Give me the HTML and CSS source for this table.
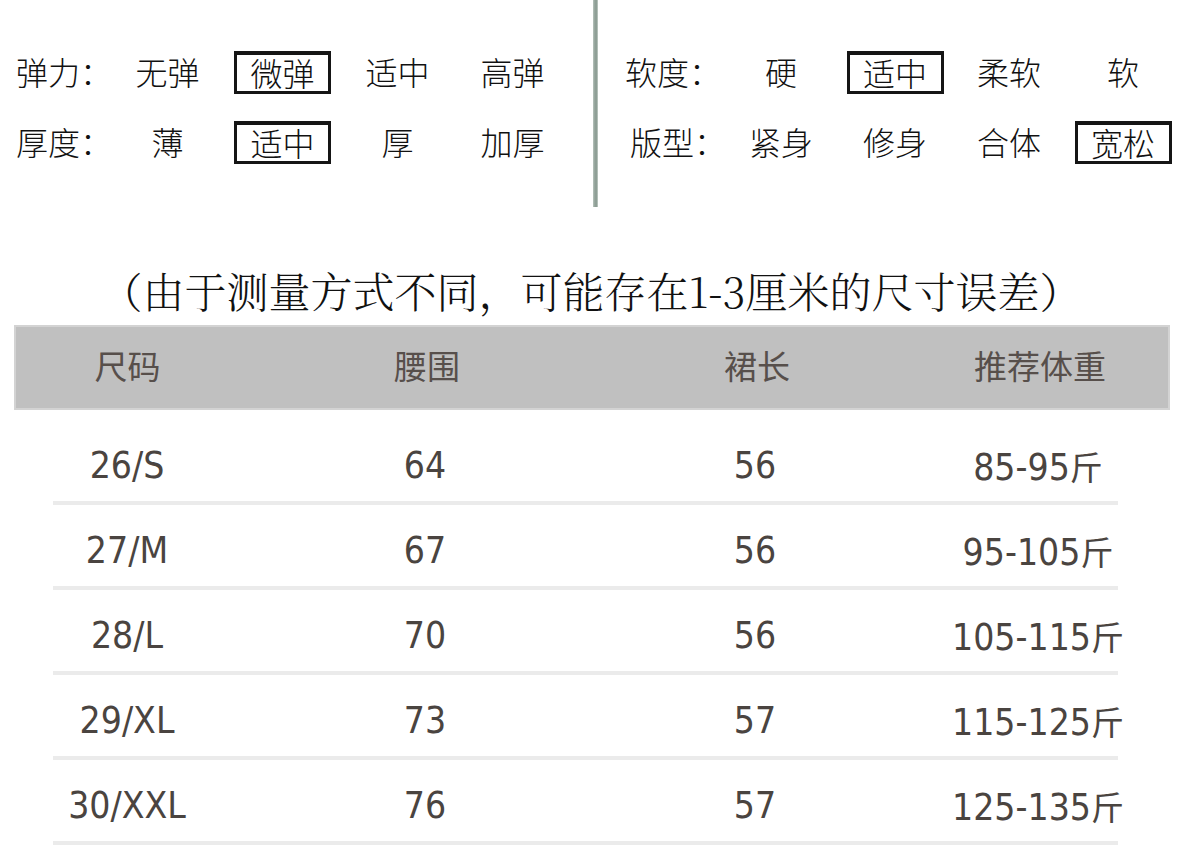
FILE: index.html
```html
<!DOCTYPE html>
<html lang="zh-CN">
<head>
<meta charset="utf-8">
<title>尺码表</title>
<link rel="stylesheet" href="styles.css">
</head>
<body>
<div class="page">
  <section class="attrs">
    <div class="attr-col attr-left">
      <div class="attr-row">
        <span class="attr-label">弹力：</span>
        <span class="opt">无弹</span>
        <span class="opt"><span class="box">微弹</span></span>
        <span class="opt">适中</span>
        <span class="opt">高弹</span>
      </div>
      <div class="attr-row">
        <span class="attr-label">厚度：</span>
        <span class="opt">薄</span>
        <span class="opt"><span class="box">适中</span></span>
        <span class="opt">厚</span>
        <span class="opt">加厚</span>
      </div>
    </div>
    <div class="divider"></div>
    <div class="attr-col attr-right">
      <div class="attr-row">
        <span class="attr-label">软度：</span>
        <span class="opt">硬</span>
        <span class="opt"><span class="box">适中</span></span>
        <span class="opt">柔软</span>
        <span class="opt">软</span>
      </div>
      <div class="attr-row">
        <span class="attr-label attr-label-shift">版型：</span>
        <span class="opt">紧身</span>
        <span class="opt">修身</span>
        <span class="opt">合体</span>
        <span class="opt"><span class="box">宽松</span></span>
      </div>
    </div>
  </section>

  <p class="note">（由于测量方式不同，可能存在1-3厘米的尺寸误差）</p>

  <div class="size-table">
    <div class="thead">
      <span>尺码</span><span>腰围</span><span>裙长</span><span>推荐体重</span>
    </div>
    <div class="trow"><span>26/S</span><span>64</span><span>56</span><span>85-95<i class="cjk">斤</i></span></div>
    <div class="trow"><span>27/M</span><span>67</span><span>56</span><span>95-105<i class="cjk">斤</i></span></div>
    <div class="trow"><span>28/L</span><span>70</span><span>56</span><span>105-115<i class="cjk">斤</i></span></div>
    <div class="trow"><span>29/XL</span><span>73</span><span>57</span><span>115-125<i class="cjk">斤</i></span></div>
    <div class="trow"><span>30/XXL</span><span>76</span><span>57</span><span>125-135<i class="cjk">斤</i></span></div>
  </div>
</div>
</body>
</html>
```

FILE: styles.css
```css
html, body {
  margin: 0;
  padding: 0;
  background: #ffffff;
}

.page {
  width: 1200px;
  height: 858px;
  overflow: hidden;
  font-family: "Noto Sans CJK SC", "Noto Sans", sans-serif;
}

/* ---------- attribute block ---------- */
.attrs {
  display: flex;
  height: 207px;
}

.attr-col {
  display: flex;
  flex-direction: column;
  padding-top: 36px;
}

.attr-left {
  width: 593px;
  padding-left: 16px;
  box-sizing: border-box;
}

.attr-right {
  flex: 1;
  padding-left: 27px;
}

.divider {
  width: 5px;
  height: 207px;
  background: linear-gradient(to right, #b8c4bd, #8f9f96 40%, #8f9f96 70%, #c4cec8);
}

.attr-row {
  display: grid;
  grid-template-columns: 94px repeat(4, 115px);
  align-items: center;
  height: 70px;
  font-size: 32px;
  font-weight: 300;
  color: #111111;
}

.attr-right .attr-row {
  grid-template-columns: 99px repeat(4, 114px);
}

.attr-label {
  white-space: nowrap;
}

.attr-label-shift {
  padding-left: 5px;
}

.opt {
  display: flex;
  justify-content: center;
  align-items: center;
  white-space: nowrap;
}

.box {
  display: inline-flex;
  justify-content: center;
  align-items: center;
  width: 97px;
  height: 43px;
  box-sizing: border-box;
  border: 3px solid #151515;
  border-top-width: 4px;
  line-height: 1;
  margin-top: 3px;
  padding-bottom: 3px;
}

/* ---------- note ---------- */
.note {
  margin: 55px 0 3px;
  height: 60px;
  line-height: 56px;
  text-align: center;
  font-family: "Noto Serif CJK SC", "Liberation Serif", "Noto Sans CJK SC", serif;
  font-size: 42px;
  font-weight: 300;
  color: #111111;
  padding-right: 18px;
  white-space: nowrap;
}

/* ---------- size table ---------- */
.size-table {
  margin-left: 14px;
  width: 1156px;
}

.thead,
.trow {
  display: grid;
  grid-template-columns: 226px 370px 290px 270px;
  text-align: center;
}

.thead {
  height: 85px;
  box-sizing: border-box;
  background: #c0c0c0;
  border: 2px solid #d3d3d3;
  align-items: center;
  font-size: 33px;
  color: #574f4b;
  margin-bottom: 10px;
  padding-bottom: 5px;
}

.thead span:first-child {
  padding-right: 3px;
}

.thead span:last-child {
  padding-left: 6px;
}

.trow {
  height: 85px;
  box-sizing: border-box;
  padding-bottom: 4px;
  padding-top: 9px;
  line-height: 74px;
  font-family: "Liberation Sans Narrow", "DejaVu Sans Condensed", "Liberation Sans", "Noto Sans CJK SC", sans-serif;
  font-size: 37px;
  color: #4a4440;
  background: linear-gradient(#ebebeb, #ebebeb) 39px 100% / 1065px 4px no-repeat;
}

.trow span {
  white-space: nowrap;
}

.trow span:last-child {
  padding-left: 6px;
}

.cjk {
  font-style: normal;
  font-family: "Noto Sans CJK SC", sans-serif;
  font-size: 33px;
}
```
